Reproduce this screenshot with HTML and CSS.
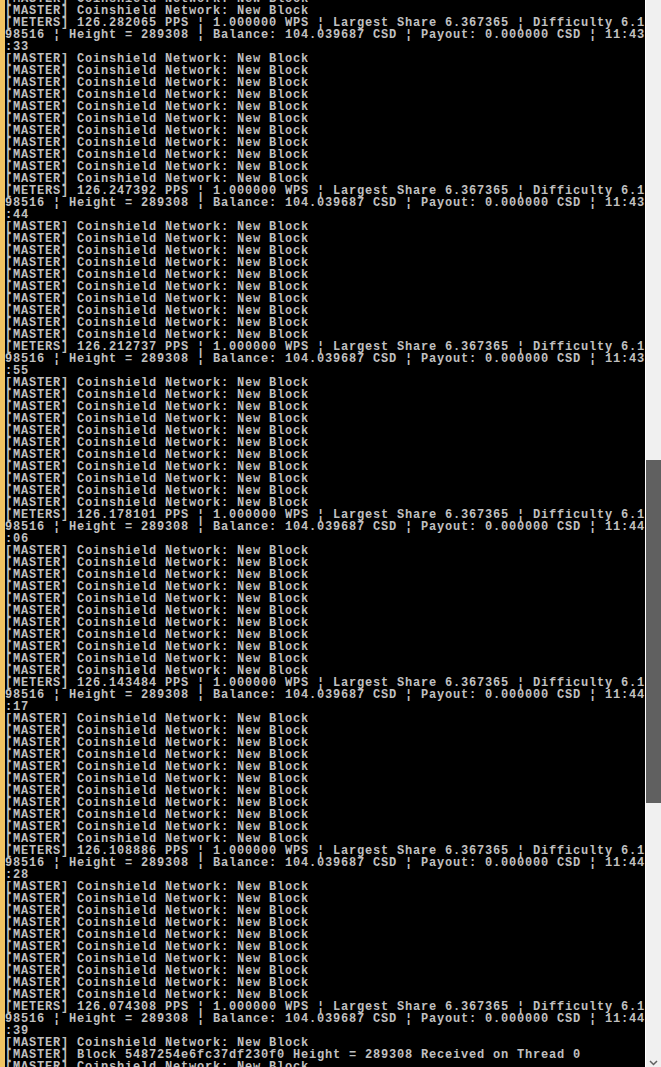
FILE: index.html
```html
<!DOCTYPE html>
<html lang="en">
<head>
<meta charset="utf-8">
<title>Coinshield Miner</title>
<link rel="stylesheet" href="styles.css">
</head>
<body>
<div class="window">
  <div class="accent"></div>
  <div class="console"><pre class="log">[MASTER] Coinshield Network: New Block
[MASTER] Coinshield Network: New Block
[METERS] 126.282065 PPS ¦ 1.000000 WPS ¦ Largest Share 6.367365 ¦ Difficulty 6.1
98516 ¦ Height = 289308 ¦ Balance: 104.039687 CSD ¦ Payout: 0.000000 CSD ¦ 11:43
:33
[MASTER] Coinshield Network: New Block
[MASTER] Coinshield Network: New Block
[MASTER] Coinshield Network: New Block
[MASTER] Coinshield Network: New Block
[MASTER] Coinshield Network: New Block
[MASTER] Coinshield Network: New Block
[MASTER] Coinshield Network: New Block
[MASTER] Coinshield Network: New Block
[MASTER] Coinshield Network: New Block
[MASTER] Coinshield Network: New Block
[MASTER] Coinshield Network: New Block
[METERS] 126.247392 PPS ¦ 1.000000 WPS ¦ Largest Share 6.367365 ¦ Difficulty 6.1
98516 ¦ Height = 289308 ¦ Balance: 104.039687 CSD ¦ Payout: 0.000000 CSD ¦ 11:43
:44
[MASTER] Coinshield Network: New Block
[MASTER] Coinshield Network: New Block
[MASTER] Coinshield Network: New Block
[MASTER] Coinshield Network: New Block
[MASTER] Coinshield Network: New Block
[MASTER] Coinshield Network: New Block
[MASTER] Coinshield Network: New Block
[MASTER] Coinshield Network: New Block
[MASTER] Coinshield Network: New Block
[MASTER] Coinshield Network: New Block
[METERS] 126.212737 PPS ¦ 1.000000 WPS ¦ Largest Share 6.367365 ¦ Difficulty 6.1
98516 ¦ Height = 289308 ¦ Balance: 104.039687 CSD ¦ Payout: 0.000000 CSD ¦ 11:43
:55
[MASTER] Coinshield Network: New Block
[MASTER] Coinshield Network: New Block
[MASTER] Coinshield Network: New Block
[MASTER] Coinshield Network: New Block
[MASTER] Coinshield Network: New Block
[MASTER] Coinshield Network: New Block
[MASTER] Coinshield Network: New Block
[MASTER] Coinshield Network: New Block
[MASTER] Coinshield Network: New Block
[MASTER] Coinshield Network: New Block
[MASTER] Coinshield Network: New Block
[METERS] 126.178101 PPS ¦ 1.000000 WPS ¦ Largest Share 6.367365 ¦ Difficulty 6.1
98516 ¦ Height = 289308 ¦ Balance: 104.039687 CSD ¦ Payout: 0.000000 CSD ¦ 11:44
:06
[MASTER] Coinshield Network: New Block
[MASTER] Coinshield Network: New Block
[MASTER] Coinshield Network: New Block
[MASTER] Coinshield Network: New Block
[MASTER] Coinshield Network: New Block
[MASTER] Coinshield Network: New Block
[MASTER] Coinshield Network: New Block
[MASTER] Coinshield Network: New Block
[MASTER] Coinshield Network: New Block
[MASTER] Coinshield Network: New Block
[MASTER] Coinshield Network: New Block
[METERS] 126.143484 PPS ¦ 1.000000 WPS ¦ Largest Share 6.367365 ¦ Difficulty 6.1
98516 ¦ Height = 289308 ¦ Balance: 104.039687 CSD ¦ Payout: 0.000000 CSD ¦ 11:44
:17
[MASTER] Coinshield Network: New Block
[MASTER] Coinshield Network: New Block
[MASTER] Coinshield Network: New Block
[MASTER] Coinshield Network: New Block
[MASTER] Coinshield Network: New Block
[MASTER] Coinshield Network: New Block
[MASTER] Coinshield Network: New Block
[MASTER] Coinshield Network: New Block
[MASTER] Coinshield Network: New Block
[MASTER] Coinshield Network: New Block
[MASTER] Coinshield Network: New Block
[METERS] 126.108886 PPS ¦ 1.000000 WPS ¦ Largest Share 6.367365 ¦ Difficulty 6.1
98516 ¦ Height = 289308 ¦ Balance: 104.039687 CSD ¦ Payout: 0.000000 CSD ¦ 11:44
:28
[MASTER] Coinshield Network: New Block
[MASTER] Coinshield Network: New Block
[MASTER] Coinshield Network: New Block
[MASTER] Coinshield Network: New Block
[MASTER] Coinshield Network: New Block
[MASTER] Coinshield Network: New Block
[MASTER] Coinshield Network: New Block
[MASTER] Coinshield Network: New Block
[MASTER] Coinshield Network: New Block
[MASTER] Coinshield Network: New Block
[METERS] 126.074308 PPS ¦ 1.000000 WPS ¦ Largest Share 6.367365 ¦ Difficulty 6.1
98516 ¦ Height = 289308 ¦ Balance: 104.039687 CSD ¦ Payout: 0.000000 CSD ¦ 11:44
:39
[MASTER] Coinshield Network: New Block
[MASTER] Block 5487254e6fc37df230f0 Height = 289308 Received on Thread 0
[MASTER] Coinshield Network: New Block</pre></div>
  <div class="divider"></div>
  <div class="scrollbar">
    <div class="track"><div class="thumb"></div></div>
    <div class="arrow">
      <svg width="9" height="6" viewBox="0 0 9 6"><path d="M1 1 L4.5 4.5 L8 1" fill="none" stroke="#606060" stroke-width="1.5"/></svg>
    </div>
  </div>
</div>
</body>
</html>
```
FILE: styles.css
```css
html, body {
  margin: 0;
  padding: 0;
  background: #000;
  overflow: hidden;
}
.window {
  display: flex;
  width: 661px;
  height: 1067px;
  overflow: hidden;
}
.accent {
  width: 5px;
  flex: none;
  background: #f1c463;
}
.console {
  width: 640px;
  flex: none;
  background: #000;
  overflow: hidden;
}
.log {
  margin: -7px 0 0 0;
  font-family: "Liberation Mono", "DejaVu Sans Mono", monospace;
  font-weight: bold;
  font-size: 12px;
  letter-spacing: 0.8px;
  line-height: 12px;
  color: #c0c0c0;
  white-space: pre;
}
.divider {
  width: 1px;
  flex: none;
  background: #ffffff;
}
.scrollbar {
  width: 15px;
  flex: none;
  background: #f0f0f0;
  display: flex;
  flex-direction: column;
}
.track {
  flex: 1;
}
.thumb {
  margin-top: 460px;
  height: 343px;
  background: #606060;
}
.arrow {
  height: 14px;
  display: flex;
  justify-content: center;
  align-items: flex-end;
  padding-bottom: 1px;
}
.arrow svg {
  display: block;
}
```
